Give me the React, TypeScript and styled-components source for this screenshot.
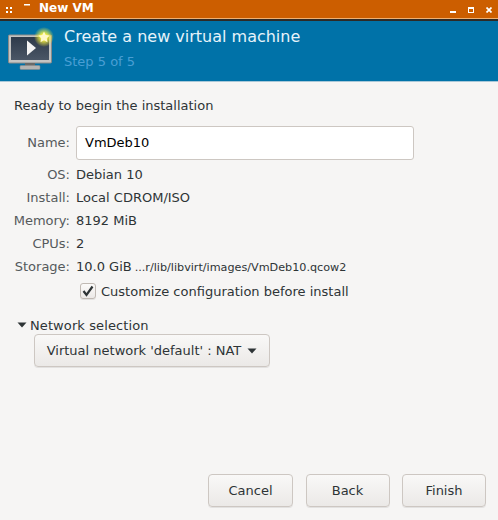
import { Fragment, type ReactNode } from 'react';
import styled, { createGlobalStyle } from 'styled-components';

const Global = createGlobalStyle`
    html, body {
        margin: 0;
        padding: 0;
        width: 498px;
        height: 520px;
        overflow: hidden;
        background: #f6f5f4;
    }
    * {
        box-sizing: border-box;
    }
`;

const Window = styled.div`
    width: 498px;
    height: 520px;
    display: flex;
    flex-direction: column;
    background: #f6f5f4;
    font-family: 'DejaVu Sans', sans-serif;
    font-size: 13px;
    color: #2e3436;
`;

const TitleBar = styled.div`
    height: 21px;
    flex: none;
    display: flex;
    align-items: center;
    padding: 0 0 3px 6px;
    background: #cc5e00;
    border-bottom: 2px solid #2e2a26;
    box-shadow: inset 0 -1px 0 #f0b070;
    color: #fff;
`;

const MenuGlyphs = styled.div`
    display: flex;
    align-items: flex-start;
    gap: 12px;
    width: 33px;
`;

const WindowTitle = styled.span`
    font-weight: bold;
    font-size: 12px;
`;

const TitleButtons = styled.div`
    margin-left: auto;
    display: flex;
    align-items: center;
    gap: 12px;
    padding-right: 6px;
`;

const Header = styled.div`
    height: 61px;
    flex: none;
    display: flex;
    align-items: flex-start;
    gap: 8px;
    padding: 6px 0 0 8px;
    background: #0072a8;
    border-bottom: 1px solid #a8c8d8;
`;

const HeaderText = styled.div`
    display: flex;
    flex-direction: column;
    gap: 7px;
`;

const HeaderTitle = styled.div`
    font-size: 16px;
    line-height: 20px;
    color: #e6f3fa;
`;

const HeaderStep = styled.div`
    font-size: 13px;
    line-height: 16px;
    color: #4a9fd4;
`;

const Body = styled.div`
    flex: 1;
    display: flex;
    flex-direction: column;
    padding: 16px 12px 13px 14px;
`;

const Intro = styled.div`
    line-height: 16px;
    margin-bottom: 12px;
`;

const Form = styled.div`
    display: grid;
    grid-template-columns: 56px 1fr;
    column-gap: 6px;
    align-items: start;
`;

const Label = styled.div<{ $h: number; $gap?: number }>`
    height: ${p => p.$h}px;
    line-height: ${p => p.$h}px;
    margin-bottom: ${p => p.$gap ?? 0}px;
    text-align: right;
    color: #555a5c;
    white-space: nowrap;
    justify-self: end;
`;

const Value = styled.div`
    height: 23px;
    line-height: 23px;
    white-space: nowrap;
`;

const StoragePath = styled.span`
    font-size: 11.2px;
    margin-left: 3px;
`;

const NameInput = styled.div`
    width: 338px;
    height: 34px;
    margin-bottom: 3px;
    padding-left: 8px;
    line-height: 32px;
    background: #fff;
    border: 1px solid #cdc7c2;
    border-radius: 3px;
    color: #000;
`;

const CheckRow = styled.div`
    display: flex;
    align-items: center;
    gap: 5px;
    height: 26px;
    margin-left: 66px;
`;

const CheckBox = styled.div`
    width: 16px;
    height: 16px;
    display: flex;
    align-items: center;
    justify-content: center;
    background: linear-gradient(#fbfaf9, #ece9e7);
    border: 1px solid #c0b9b3;
    border-radius: 3px;
    box-shadow: 0 1px 0 rgba(0, 0, 0, 0.08);
`;

const Expander = styled.div`
    display: flex;
    align-items: center;
    gap: 3px;
    height: 16px;
    margin: 13px 0 1px 3px;
    letter-spacing: 0.1px;
`;

const ComboRow = styled.div`
    padding-left: 20px;
`;

const PushButton = styled.div<{ $w: number }>`
    display: flex;
    align-items: center;
    justify-content: center;
    gap: 6px;
    width: ${p => p.$w}px;
    height: 33px;
    background: linear-gradient(#f9f8f7, #ebe9e7);
    border: 1px solid #cdc7c2;
    border-radius: 4px;
    box-shadow: 0 1px 0 rgba(0, 0, 0, 0.08);
`;

const Footer = styled.div`
    margin-top: auto;
    display: flex;
    justify-content: flex-end;
    gap: 12.5px;
`;

const Menu = () => (
    <MenuGlyphs>
        <svg width="6" height="6" viewBox="0 0 6 6" style={{ marginTop: 3 }}>
            <path d="M0 0h2v2H0zM4 0h2v2H4zM0 4h2v2H0zM4 4h2v2H4z" fill="#fff" />
        </svg>
        <svg width="6" height="3" viewBox="0 0 6 3">
            <rect x="0" y="0" width="6" height="1.5" fill="#fff" />
        </svg>
    </MenuGlyphs>
);

const WinButtons = () => (
    <TitleButtons>
        <svg width="6" height="6" viewBox="0 0 6 6" style={{ marginTop: 3 }}>
            <rect x="0" y="4" width="6" height="2" fill="#fff" />
        </svg>
        <svg width="6" height="6" viewBox="0 0 6 6" style={{ marginTop: 3 }}>
            <path d="M0 0h6v6H0z M1 2v3h4V2z" fill="#fff" fillRule="evenodd" />
        </svg>
        <svg width="6" height="6" viewBox="0 0 6 6" style={{ marginTop: 3 }}>
            <path d="M0.5 0.5L5.5 5.5M5.5 0.5L0.5 5.5" stroke="#fff" strokeWidth="1.7" />
        </svg>
    </TitleButtons>
);

const VmIcon = () => (
    <svg width="48" height="48" viewBox="0 0 48 48">
        <defs>
            <radialGradient id="glow">
                <stop offset="0.3" stopColor="#f5f040" />
                <stop offset="1" stopColor="#f5f040" stopOpacity="0" />
            </radialGradient>
            <linearGradient id="screen" x1="0" y1="0" x2="0" y2="1">
                <stop offset="0" stopColor="#2e3a4a" />
                <stop offset="1" stopColor="#4a5666" />
            </linearGradient>
        </defs>
        <rect x="0.5" y="8" width="43" height="28" rx="1" fill="#c4c4c2" stroke="#8a8a88" />
        <rect x="3" y="10" width="38" height="23" fill="url(#screen)" />
        <rect x="17" y="36" width="10" height="3" fill="#6a6a68" />
        <rect x="12" y="38.5" width="20" height="4" rx="1" fill="#b4b4b2" stroke="#8a8a88" strokeWidth="0.5" />
        <path d="M19 13.5L28 21L19 28.5z" fill="#f4f4f4" />
        <circle cx="36" cy="10" r="10" fill="url(#glow)" />
        <path d="M36 4.5l1.7 3.6 3.9.5-2.8 2.7.7 3.9-3.5-1.9-3.5 1.9.7-3.9-2.8-2.7 3.9-.5z" fill="#fff8c8" />
    </svg>
);

const Arrow = () => (
    <svg width="10" height="6" viewBox="0 0 10 6">
        <path d="M0.5 0.5h9L5 5.5z" fill="#2e3436" />
    </svg>
);

const rows: [string, ReactNode][] = [
    ['OS:', 'Debian 10'],
    ['Install:', 'Local CDROM/ISO'],
    ['Memory:', '8192 MiB'],
    ['CPUs:', '2'],
    [
        'Storage:',
        <>
            10.0 GiB<StoragePath>...r/lib/libvirt/images/VmDeb10.qcow2</StoragePath>
        </>,
    ],
];

export default function App() {
    return (
        <Window>
            <Global />
            <TitleBar>
                <Menu />
                <WindowTitle>New VM</WindowTitle>
                <WinButtons />
            </TitleBar>
            <Header>
                <VmIcon />
                <HeaderText>
                    <HeaderTitle>Create a new virtual machine</HeaderTitle>
                    <HeaderStep>Step 5 of 5</HeaderStep>
                </HeaderText>
            </Header>
            <Body>
                <Intro>Ready to begin the installation</Intro>
                <Form>
                    <Label $h={34} $gap={3}>Name:</Label>
                    <NameInput>VmDeb10</NameInput>
                    {rows.map(([label, value]) => (
                        <Fragment key={label}>
                            <Label $h={23}>{label}</Label>
                            <Value>{value}</Value>
                        </Fragment>
                    ))}
                </Form>
                <CheckRow>
                    <CheckBox>
                        <svg width="14" height="14" viewBox="0 0 14 14">
                            <path d="M2.5 7L5.5 11L11.5 2.5" fill="none" stroke="#2e3436" strokeWidth="2.2" />
                        </svg>
                    </CheckBox>
                    Customize configuration before install
                </CheckRow>
                <Expander>
                    <Arrow />
                    Network selection
                </Expander>
                <ComboRow>
                    <PushButton $w={236}>
                        Virtual network 'default' : NAT
                        <Arrow />
                    </PushButton>
                </ComboRow>
                <Footer>
                    <PushButton $w={85}>Cancel</PushButton>
                    <PushButton $w={84}>Back</PushButton>
                    <PushButton $w={84}>Finish</PushButton>
                </Footer>
            </Body>
        </Window>
    );
}
